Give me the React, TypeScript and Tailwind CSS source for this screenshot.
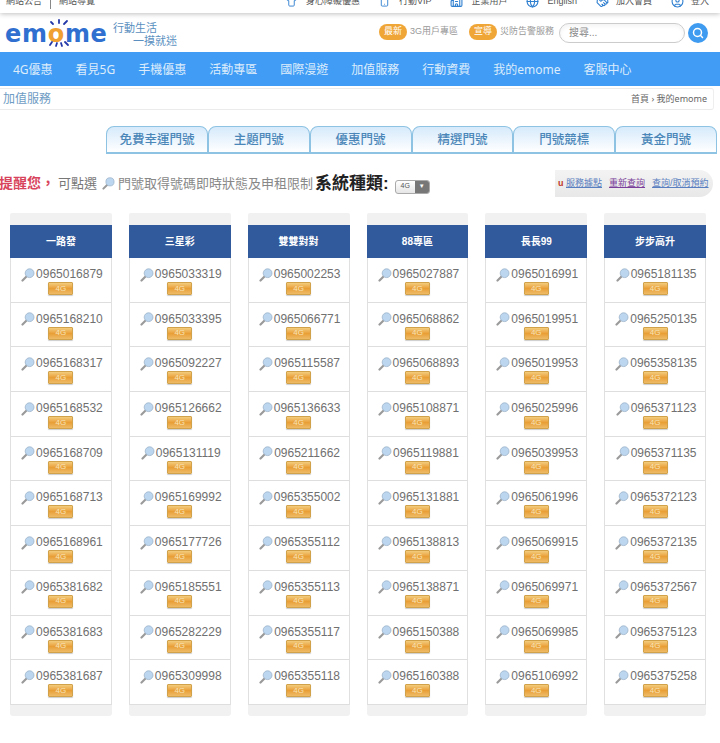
import { Search, Smartphone, Building2, Globe, Handshake, CircleUser, Shirt } from "lucide-react";

const navItems = ["4G優惠", "看見5G", "手機優惠", "活動專區", "國際漫遊", "加值服務", "行動資費", "我的emome", "客服中心"];
const tabs = ["免費幸運門號", "主題門號", "優惠門號", "精選門號", "門號競標", "黃金門號"];

const columns = [
  { title: "一路發", numbers: ["0965016879", "0965168210", "0965168317", "0965168532", "0965168709", "0965168713", "0965168961", "0965381682", "0965381683", "0965381687"] },
  { title: "三星彩", numbers: ["0965033319", "0965033395", "0965092227", "0965126662", "0965131119", "0965169992", "0965177726", "0965185551", "0965282229", "0965309998"] },
  { title: "雙雙對對", numbers: ["0965002253", "0965066771", "0965115587", "0965136633", "0965211662", "0965355002", "0965355112", "0965355113", "0965355117", "0965355118"] },
  { title: "88專區", numbers: ["0965027887", "0965068862", "0965068893", "0965108871", "0965119881", "0965131881", "0965138813", "0965138871", "0965150388", "0965160388"] },
  { title: "長長99", numbers: ["0965016991", "0965019951", "0965019953", "0965025996", "0965039953", "0965061996", "0965069915", "0965069971", "0965069985", "0965106992"] },
  { title: "步步高升", numbers: ["0965181135", "0965250135", "0965358135", "0965371123", "0965371135", "0965372123", "0965372135", "0965372567", "0965375123", "0965375258"] },
];

function Magnifier({ size = 14 }: { size?: number }) {
  return (
    <svg width={size} height={size} viewBox="0 0 14 14" className="shrink-0">
      <path d="M6 8 L1.5 12.5" stroke="#9a9a9a" strokeWidth="2.2" strokeLinecap="round" />
      <circle cx="8.6" cy="5.2" r="4.4" fill="#bcd6f0" stroke="#9db4c9" strokeWidth="0.8" />
    </svg>
  );
}

function Logo() {
  return (
    <div className="relative w-[104px] h-[30px] shrink-0">
      <div className="absolute left-0 top-0 text-[24px] leading-[32px] font-bold text-[#2f6fd0] font-['DejaVu_Sans',sans-serif] tracking-[0.7px]">
        em<span className="text-[#f0a030]">o</span>me
      </div>
      <svg width="30" height="30" viewBox="0 0 30 30" className="absolute left-[39px] top-0">
        <g stroke="#2438a8" strokeWidth="1.8" strokeLinecap="round">
          <path d="M9 6 L7 4" />
          <path d="M15 5 L15 2" />
          <path d="M20 6 L23 3" />
          <path d="M8 24 L6 27" />
          <path d="M13 25 L12 28" />
          <path d="M17 25 L18 28" />
          <path d="M21 24 L24 27" />
        </g>
      </svg>
    </div>
  );
}

export default function App() {
  return (
    <div className="w-[720px] h-[743px] overflow-hidden bg-white font-['Liberation_Sans','Noto_Sans_CJK_TC',sans-serif] text-[#666]">
      {/* top utility bar, cut off by the page scroll */}
      <div className="h-[13px] bg-white shadow-[0_1px_5px_rgba(0,0,0,0.25)] overflow-hidden relative z-10 flex items-start justify-between pl-[6px] pr-[11px] text-[9px] leading-[16px] text-[#555]">
        <div className="flex items-center h-[16px] -mt-[7px] shrink-0">
          <span>網站公告</span>
          <span className="w-px h-[16px] bg-[#888] mx-[8px]" />
          <span>網站導覽</span>
        </div>
        <div className="flex items-center gap-[19px] h-[16px] -mt-[7px]">
          <span className="flex items-center gap-[9px]"><Shirt size={11} className="text-[#2f7fd0]" />身心障礙優惠</span>
          <span className="flex items-center gap-[9px]"><Smartphone size={11} className="text-[#2f7fd0]" />行動VIP</span>
          <span className="flex items-center gap-[8px]"><Building2 size={13} className="text-[#2f7fd0]" />企業用戶</span>
          <span className="flex items-center gap-[8px]"><Globe size={13} className="text-[#2f7fd0]" />English</span>
          <span className="flex items-center gap-[7px]"><Handshake size={13} className="text-[#2f7fd0]" />加入會員</span>
          <span className="flex items-center gap-[7px]"><CircleUser size={13} className="text-[#2f7fd0]" />登入</span>
        </div>
      </div>

      {/* logo and search row */}
      <div className="h-[39px] flex items-center pl-[5px] pr-[12px]">
        <Logo />
        <div className="ml-[4px] pt-[4px] text-[11px] leading-[13px] text-[#5a8fc0] w-[70px] shrink-0">
          <div>行動生活</div>
          <div className="pl-[20px]">一摸就迷</div>
        </div>
        <div className="ml-auto flex items-center text-[9px] text-[#999] whitespace-nowrap">
          <span className="w-[28px] h-[16px] mb-[2px] rounded-full bg-[#f0a537] text-white flex items-center justify-center">最新</span>
          <span className="ml-[3px] mb-[1px] w-[47px]">3G用戶專區</span>
          <span className="ml-[12px] w-[28px] h-[16px] mb-[2px] rounded-full bg-[#f0a537] text-white flex items-center justify-center">宣導</span>
          <span className="ml-[3px] mb-[1px] w-[55px]">災防告警服務</span>
          <div className="ml-[4px] w-[126px] h-[20px] rounded-full border border-[#ccc] shadow-inner pl-[9px] flex items-center text-[10px] text-[#888]">搜尋...</div>
          <div className="ml-[3px] w-[20px] h-[20px] rounded-full bg-[#3f9bf0] flex items-center justify-center">
            <Search size={12} strokeWidth={3} className="text-white" />
          </div>
        </div>
      </div>

      {/* main nav */}
      <div className="h-[34px] bg-[#419cf6] flex items-center pl-[13px] pt-[1px] gap-[23px] text-[12px] text-[#dcecfb] font-['Noto_Sans','Noto_Sans_CJK_TC',sans-serif]">
        {navItems.map((item) => (
          <span key={item} className="whitespace-nowrap">{item}</span>
        ))}
      </div>

      {/* breadcrumb */}
      <div className="mt-[2px] h-[22px] border-y border-r border-y-[#ebebeb] border-r-[#eeeeee] rounded-r-[3px] mr-[6px] flex items-center justify-between pl-[3px] pr-[6px]">
        <span className="text-[12px] text-[#6f9cc4]">加值服務</span>
        <span className="text-[9px] text-[#666] font-['Noto_Sans','Noto_Sans_CJK_TC',sans-serif]">首頁 › 我的emome</span>
      </div>

      {/* tabs */}
      <div className="mt-[16px] ml-[106px] w-[611px] grid grid-cols-6 h-[28px]">
        {tabs.map((tab) => (
          <div key={tab} className="border border-b-2 border-[#8ec3e3] rounded-t-[8px] bg-gradient-to-b from-[#d6eafb] to-white flex items-center justify-center text-[12.5px] font-medium text-[#4a86b8] pt-[2px]">
            {tab}
          </div>
        ))}
      </div>

      {/* notice row */}
      <div className="mt-[14px] h-[31px] flex items-center justify-between pr-[7px]">
        <div className="flex items-center whitespace-nowrap">
          <span className="text-[14px] font-bold text-[#d8445c] -ml-[1px]">提醒您，</span>
          <span className="text-[13px] text-[#777] ml-[3px]">可點選</span>
          <span className="ml-[5px] mr-[3px]"><Magnifier size={13} /></span>
          <span className="text-[13px] text-[#888]">門號取得號碼即時狀態及申租限制</span>
          <span className="ml-[2px] text-[17px] font-bold text-[#222]">系統種類:</span>
          <span className="ml-[6px] mt-[6px] w-[35px] h-[14px] rounded-[3px] border border-[#aaa] bg-gradient-to-b from-white to-[#e6e6e6] flex overflow-hidden text-[7px] text-[#555]">
            <span className="flex-1 flex items-center justify-center">4G</span>
            <span className="w-[14px] bg-[#777] text-white flex items-center justify-center text-[6px]">▼</span>
          </span>
        </div>
        <div className="h-[27px] w-[158px] rounded-r-full bg-gradient-to-b from-[#f3f3f3] to-[#e8e8e8] flex items-center pl-[3px] text-[9px] text-[#5a7fc0] whitespace-nowrap">
          <span className="text-[#c0392b] font-bold w-[8px]">u</span>
          <span className="underline">服務據點</span>
          <span className="underline text-[#7a3f9a] ml-[7px]">重新查詢</span>
          <span className="underline ml-[7px]">查詢/取消預約</span>
        </div>
      </div>

      {/* number lists */}
      <div className="mt-[14px] pl-[10px] w-[706px] grid grid-cols-6 gap-x-[17px]">
        {columns.map((col) => (
          <div key={col.title}>
            <div className="h-[12px] rounded-t-[2px] bg-[#f1f1f1]" />
            <div className="h-[33px] bg-[#315a9c] flex items-center justify-center text-[10px] font-bold text-white">{col.title}</div>
            <div className="border-x border-[#e0e0e0]">
              {col.numbers.map((num) => (
                <div key={num} className="h-[44.7px] border-b border-[#dedede] flex flex-col items-center pt-[9px]">
                  <div className="flex items-center gap-[1px] pl-[2px] text-[12px] leading-[15px] text-[#707070]">
                    <Magnifier />
                    {num}
                  </div>
                  <div className="w-[25px] h-[13px] rounded-[1px] border border-[#d2a24a] bg-gradient-to-b from-[#f3cc7c] via-[#e99f35] to-[#eebb66] shadow-[0_1px_1px_rgba(0,0,0,0.2)] flex items-center justify-center text-[8px] leading-none text-[#f7e3b8]">
                    4G
                  </div>
                </div>
              ))}
            </div>
            <div className="h-[11px] rounded-b-[3px] bg-[#f1f1f1]" />
          </div>
        ))}
      </div>
    </div>
  );
}
